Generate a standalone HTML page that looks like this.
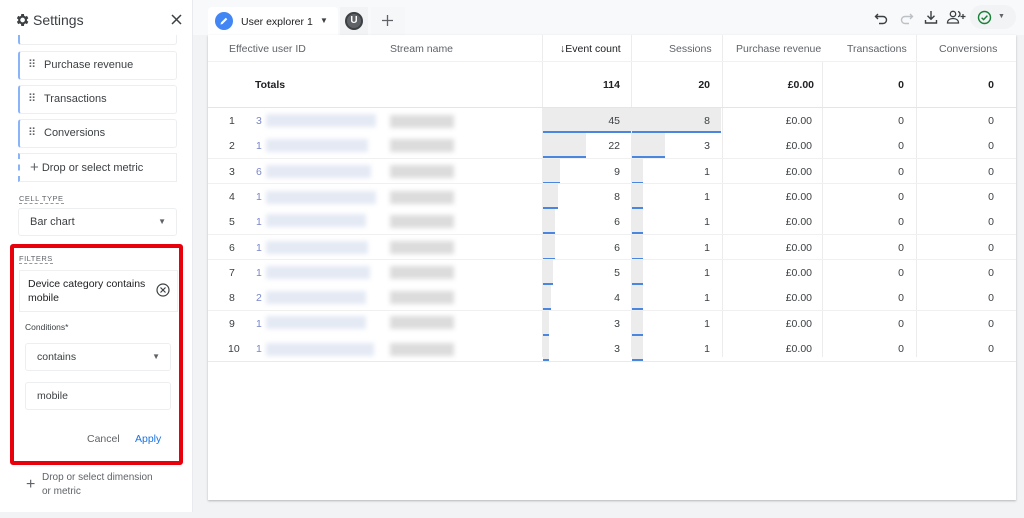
<!DOCTYPE html>
<html><head><meta charset="utf-8"><style>
*{box-sizing:border-box;margin:0;padding:0}
body{width:1024px;height:518px;overflow:hidden;background:#f1f3f4;font-family:"Liberation Sans",Arial,sans-serif;color:#3c4043;position:relative}
.a{position:absolute}
.side{left:0;top:0;width:193px;height:512px;background:#fff;border-right:1px solid #e8eaed}
.chip{position:absolute;left:18px;width:159px;height:29px;border:1px solid #eceef0;border-left:2px solid #8ab4f8;border-radius:3px;font-size:11px;line-height:27px;padding-left:24px;color:#3c4043;background:#fff}
.chip:before{content:"⠿";position:absolute;left:8px;top:0;font-size:11px;color:#5f6368}
.card{left:208px;top:35px;width:808px;height:465px;background:#fff;box-shadow:0 1px 2px rgba(0,0,0,.25)}
.h{position:absolute;top:43px;font-size:10.5px;color:#5f6368}
.r{position:absolute;left:208px;width:808px;height:25px;font-size:10.5px;color:#3c4043}
.r span{position:absolute;top:7px}
.n{left:21px}
.num{text-align:right}
.vl{position:absolute;top:35px;width:1px;height:322px;background:#ececec}
.bar{position:absolute;height:25px;background:#ececec;border-bottom:2px solid #4a86e0}
.blob1{position:absolute;height:13px;background:#e4e9f4;filter:blur(2.5px)}
.blob2{position:absolute;height:13px;background:#dcdcdc;filter:blur(2.5px)}
</style></head><body>
<div class="a" style="left:0;top:0;width:1024px;height:35px;background:#f8f9fa"></div>
<div class="a side"></div>
<svg class="a" style="left:14px;top:12px" width="16" height="16" viewBox="0 0 24 24"><path fill="#3c4043" d="M19.4 13a7.6 7.6 0 0 0 0-2l2.1-1.6-2-3.5-2.5 1a7 7 0 0 0-1.7-1L14.9 3h-4l-.4 2.9a7 7 0 0 0-1.7 1l-2.5-1-2 3.5L6.4 11a7.6 7.6 0 0 0 0 2l-2.1 1.6 2 3.5 2.5-1a7 7 0 0 0 1.7 1l.4 2.9h4l.4-2.9a7 7 0 0 0 1.7-1l2.5 1 2-3.5zM12.9 15.5a3.5 3.5 0 1 1 0-7 3.5 3.5 0 0 1 0 7z"/></svg>
<div class="a" style="left:33px;top:12px;font-size:14px;color:#3c4043">Settings</div>
<svg class="a" style="left:171px;top:14px" width="11" height="11" viewBox="0 0 11 11"><path d="M1 1L10 10M10 1L1 10" stroke="#3c4043" stroke-width="1.5"/></svg>
<div class="a" style="left:18px;top:35px;width:159px;height:10px;border:1px solid #eceef0;border-top:none;border-left:2px solid #8ab4f8;border-radius:0 0 3px 3px"></div>
<div class="chip" style="top:51px">Purchase revenue</div>
<div class="chip" style="top:85px">Transactions</div>
<div class="chip" style="top:119px">Conversions</div>
<div class="a" style="left:18px;top:153px;width:159px;height:29px;border:1px solid #eceef0;border-left:2px dashed #8ab4f8;font-size:11px;line-height:27px;padding-left:10px;color:#3c4043"><span style="font-size:15px;vertical-align:-1px;color:#5f6368">+</span> Drop or select metric</div>
<div class="a" style="left:19px;top:194px;font-size:7.5px;letter-spacing:.5px;color:#5f6368;border-bottom:1px dashed #999">CELL TYPE</div>
<div class="a" style="left:18px;top:208px;width:159px;height:28px;border:1px solid #eceef0;border-radius:3px;font-size:11px;line-height:26px;padding-left:11px">Bar chart<span style="position:absolute;right:10px;font-size:8px;color:#5f6368">▼</span></div>
<div class="a" style="left:10px;top:244px;width:173px;height:221px;border:4px solid #e8000b;border-radius:3px"></div>
<div class="a" style="left:19px;top:254px;font-size:7.5px;letter-spacing:.5px;color:#5f6368;border-bottom:1px dashed #999">FILTERS</div>
<div class="a" style="left:19px;top:270px;width:159px;height:41px;border:1px solid #f0f0f0;border-bottom:none;font-size:10.5px;line-height:14px;padding:6px 8px;color:#202124">Device category contains<br>mobile</div>
<svg class="a" style="left:156px;top:283px" width="14" height="14" viewBox="0 0 14 14"><circle cx="7" cy="7" r="6" fill="none" stroke="#3c4043" stroke-width="1.2"/><path d="M4.5 4.5L9.5 9.5M9.5 4.5L4.5 9.5" stroke="#3c4043" stroke-width="1.2"/></svg>
<div class="a" style="left:19px;top:311px;width:159px;height:1px;background:#eee"></div>
<div class="a" style="left:25px;top:322px;font-size:8.5px;color:#3c4043">Conditions*</div>
<div class="a" style="left:25px;top:343px;width:146px;height:28px;border:1px solid #eceef0;border-radius:3px;font-size:10.5px;line-height:26px;padding-left:11px">contains<span style="position:absolute;right:10px;font-size:8px;color:#5f6368">▼</span></div>
<div class="a" style="left:25px;top:382px;width:146px;height:28px;border:1px solid #eceef0;border-radius:3px;font-size:10.5px;line-height:26px;padding-left:11px">mobile</div>
<div class="a" style="left:87px;top:433px;font-size:10.5px;color:#5f6368">Cancel</div>
<div class="a" style="left:135px;top:433px;font-size:10.5px;color:#1a73e8">Apply</div>
<div class="a" style="left:26px;top:476px;font-size:16px;color:#5f6368">+</div>
<div class="a" style="left:42px;top:471px;font-size:10px;line-height:14px;color:#5f6368">Drop or select dimension<br>or metric</div>

<!-- tabs -->
<div class="a" style="left:208px;top:7px;width:130px;height:28px;background:#fff;border-radius:4px 4px 0 0"></div>
<div class="a" style="left:215px;top:12px;width:18px;height:18px;border-radius:50%;background:#4285f4"></div>
<svg class="a" style="left:219px;top:16px" width="10" height="10" viewBox="0 0 10 10"><path d="M1.5 8.5L2 6.5 6.8 1.7 8.3 3.2 3.5 8z" fill="#fff"/></svg>
<div class="a" style="left:241px;top:16px;font-size:10.5px;color:#202124">User explorer 1</div>
<div class="a" style="left:320px;top:16px;font-size:8px;color:#3c4043">▼</div>
<div class="a" style="left:340px;top:7px;width:28px;height:28px;background:#f1f3f4"></div>
<div class="a" style="left:345px;top:12px;width:18px;height:18px;border-radius:50%;background:#5f6368;border:2px solid #3c4043;color:#fff;font-size:10px;text-align:center;line-height:14px;font-weight:bold">U</div>
<div class="a" style="left:371px;top:7px;width:34px;height:28px;background:#f6f7f8"></div>
<svg class="a" style="left:381px;top:14px" width="13" height="13" viewBox="0 0 13 13"><path d="M6.5 1V12M1 6.5H12" stroke="#5f6368" stroke-width="1.3"/></svg>
<!-- toolbar -->
<svg class="a" style="left:873px;top:10px" width="16" height="16" viewBox="0 0 16 16"><path d="M5 4L2.5 6.5 5 9M2.5 6.5H10a3.5 3.5 0 0 1 0 7H6" fill="none" stroke="#3c4043" stroke-width="1.4"/></svg>
<svg class="a" style="left:899px;top:10px" width="16" height="16" viewBox="0 0 16 16"><path d="M11 4L13.5 6.5 11 9M13.5 6.5H6a3.5 3.5 0 0 0 0 7H10" fill="none" stroke="#bdc1c6" stroke-width="1.4"/></svg>
<svg class="a" style="left:923px;top:9px" width="16" height="16" viewBox="0 0 16 16"><path d="M8 2V10M4.5 6.8L8 10.3 11.5 6.8M2.5 11v3h11v-3" fill="none" stroke="#3c4043" stroke-width="1.4"/></svg>
<svg class="a" style="left:946px;top:9px" width="20" height="16" viewBox="0 0 20 16"><circle cx="7" cy="5" r="2.7" fill="none" stroke="#3c4043" stroke-width="1.3"/><path d="M1.5 14c0-3 2.5-4.5 5.5-4.5s5.5 1.5 5.5 4.5z" fill="none" stroke="#3c4043" stroke-width="1.3"/><path d="M12 2.5a2.7 2.7 0 0 1 0 5.2M17 5v5M14.5 7.5h5" fill="none" stroke="#3c4043" stroke-width="1.3"/></svg>
<div class="a" style="left:970px;top:5px;width:46px;height:24px;border-radius:12px;background:#f1f3f4"></div>
<svg class="a" style="left:977px;top:10px" width="15" height="15" viewBox="0 0 15 15"><circle cx="7.5" cy="7.5" r="6" fill="none" stroke="#188038" stroke-width="1.4"/><path d="M4.6 7.7L6.6 9.6 10.4 5.6" fill="none" stroke="#188038" stroke-width="1.4"/></svg>
<div class="a" style="left:998px;top:13px;font-size:7px;color:#5f6368">▼</div>

<div class="a card"></div>
<div class="vl" style="left:542px"></div>
<div class="vl" style="left:631px"></div>
<div class="vl" style="left:722px"></div>
<div class="vl" style="left:822px;top:61px;height:296px"></div>
<div class="vl" style="left:916px"></div>
<div class="h" style="left:229px">Effective user ID</div>
<div class="h" style="left:390px">Stream name</div>
<div class="h" style="left:560px;color:#202124">↓Event count</div>
<div class="h" style="left:669px">Sessions</div>
<div class="h" style="left:736px">Purchase revenue</div>
<div class="h" style="left:847px">Transactions</div>
<div class="h" style="left:939px">Conversions</div>
<div class="a" style="left:208px;top:61px;width:808px;height:1px;background:#f1f1f1"></div>
<div class="a" style="left:255px;top:79px;font-size:10.5px;font-weight:bold;color:#202124">Totals</div>
<div class="a" style="left:600px;top:79px;width:20px;text-align:right;font-size:10.5px;font-weight:bold;color:#202124">114</div>
<div class="a" style="left:690px;top:79px;width:20px;text-align:right;font-size:10.5px;font-weight:bold;color:#202124">20</div>
<div class="a" style="left:770px;top:79px;width:44px;text-align:right;font-size:10.5px;font-weight:bold;color:#202124">£0.00</div>
<div class="a" style="left:890px;top:79px;width:14px;text-align:right;font-size:10.5px;font-weight:bold;color:#202124">0</div>
<div class="a" style="left:980px;top:79px;width:14px;text-align:right;font-size:10.5px;font-weight:bold;color:#202124">0</div>
<div class="a" style="left:208px;top:107px;width:808px;height:1px;background:#e5e5e5"></div>

<!-- rows -->
<div class="bar" style="left:543px;top:108px;width:88px"></div><div class="bar" style="left:632px;top:108px;width:89px"></div>
<div class="bar" style="left:543px;top:133px;width:43px"></div><div class="bar" style="left:632px;top:133px;width:33px"></div>
<div class="bar" style="left:543px;top:159px;width:17px"></div><div class="bar" style="left:632px;top:159px;width:11px"></div>
<div class="bar" style="left:543px;top:184px;width:15px"></div><div class="bar" style="left:632px;top:184px;width:11px"></div>
<div class="bar" style="left:543px;top:209px;width:12px"></div><div class="bar" style="left:632px;top:209px;width:11px"></div>
<div class="bar" style="left:543px;top:235px;width:12px"></div><div class="bar" style="left:632px;top:235px;width:11px"></div>
<div class="bar" style="left:543px;top:260px;width:10px"></div><div class="bar" style="left:632px;top:260px;width:11px"></div>
<div class="bar" style="left:543px;top:285px;width:8px"></div><div class="bar" style="left:632px;top:285px;width:11px"></div>
<div class="bar" style="left:543px;top:311px;width:6px"></div><div class="bar" style="left:632px;top:311px;width:11px"></div>
<div class="bar" style="left:543px;top:336px;width:6px"></div><div class="bar" style="left:632px;top:336px;width:11px"></div>
<div class="a" style="left:208px;top:158px;width:808px;height:1px;background:#f0f0f0"></div>
<div class="a" style="left:208px;top:183px;width:808px;height:1px;background:#f0f0f0"></div>
<div class="a" style="left:208px;top:234px;width:808px;height:1px;background:#f0f0f0"></div>
<div class="a" style="left:208px;top:259px;width:808px;height:1px;background:#f0f0f0"></div>
<div class="a" style="left:208px;top:310px;width:808px;height:1px;background:#f0f0f0"></div>
<div class="a" style="left:208px;top:361px;width:808px;height:1px;background:#eaeaea"></div>

<div class="r" style="top:108px"><span class="n">1</span><span style="left:48px;color:#7986cb">3</span><i class="blob1" style="left:58px;top:6px;width:110px"></i><i class="blob2" style="left:182px;top:7px;width:64px"></i><span class="num" style="left:390px;width:22px">45</span><span class="num" style="left:480px;width:22px">8</span><span class="num" style="left:560px;width:44px">£0.00</span><span class="num" style="left:680px;width:16px">0</span><span class="num" style="left:770px;width:16px">0</span></div>
<div class="r" style="top:133px"><span class="n">2</span><span style="left:48px;color:#7986cb">1</span><i class="blob1" style="left:58px;top:6px;width:102px"></i><i class="blob2" style="left:182px;top:6px;width:64px"></i><span class="num" style="left:390px;width:22px">22</span><span class="num" style="left:480px;width:22px">3</span><span class="num" style="left:560px;width:44px">£0.00</span><span class="num" style="left:680px;width:16px">0</span><span class="num" style="left:770px;width:16px">0</span></div>
<div class="r" style="top:159px"><span class="n">3</span><span style="left:48px;color:#7986cb">6</span><i class="blob1" style="left:58px;top:6px;width:105px"></i><i class="blob2" style="left:182px;top:6px;width:64px"></i><span class="num" style="left:390px;width:22px">9</span><span class="num" style="left:480px;width:22px">1</span><span class="num" style="left:560px;width:44px">£0.00</span><span class="num" style="left:680px;width:16px">0</span><span class="num" style="left:770px;width:16px">0</span></div>
<div class="r" style="top:184px"><span class="n">4</span><span style="left:48px;color:#7986cb">1</span><i class="blob1" style="left:58px;top:7px;width:110px"></i><i class="blob2" style="left:182px;top:7px;width:64px"></i><span class="num" style="left:390px;width:22px">8</span><span class="num" style="left:480px;width:22px">1</span><span class="num" style="left:560px;width:44px">£0.00</span><span class="num" style="left:680px;width:16px">0</span><span class="num" style="left:770px;width:16px">0</span></div>
<div class="r" style="top:209px"><span class="n">5</span><span style="left:48px;color:#7986cb">1</span><i class="blob1" style="left:58px;top:5px;width:100px"></i><i class="blob2" style="left:182px;top:6px;width:64px"></i><span class="num" style="left:390px;width:22px">6</span><span class="num" style="left:480px;width:22px">1</span><span class="num" style="left:560px;width:44px">£0.00</span><span class="num" style="left:680px;width:16px">0</span><span class="num" style="left:770px;width:16px">0</span></div>
<div class="r" style="top:235px"><span class="n">6</span><span style="left:48px;color:#7986cb">1</span><i class="blob1" style="left:58px;top:6px;width:102px"></i><i class="blob2" style="left:182px;top:6px;width:64px"></i><span class="num" style="left:390px;width:22px">6</span><span class="num" style="left:480px;width:22px">1</span><span class="num" style="left:560px;width:44px">£0.00</span><span class="num" style="left:680px;width:16px">0</span><span class="num" style="left:770px;width:16px">0</span></div>
<div class="r" style="top:260px"><span class="n">7</span><span style="left:48px;color:#7986cb">1</span><i class="blob1" style="left:58px;top:6px;width:104px"></i><i class="blob2" style="left:182px;top:6px;width:64px"></i><span class="num" style="left:390px;width:22px">5</span><span class="num" style="left:480px;width:22px">1</span><span class="num" style="left:560px;width:44px">£0.00</span><span class="num" style="left:680px;width:16px">0</span><span class="num" style="left:770px;width:16px">0</span></div>
<div class="r" style="top:285px"><span class="n">8</span><span style="left:48px;color:#7986cb">2</span><i class="blob1" style="left:58px;top:6px;width:100px"></i><i class="blob2" style="left:182px;top:6px;width:64px"></i><span class="num" style="left:390px;width:22px">4</span><span class="num" style="left:480px;width:22px">1</span><span class="num" style="left:560px;width:44px">£0.00</span><span class="num" style="left:680px;width:16px">0</span><span class="num" style="left:770px;width:16px">0</span></div>
<div class="r" style="top:311px"><span class="n">9</span><span style="left:48px;color:#7986cb">1</span><i class="blob1" style="left:58px;top:5px;width:100px"></i><i class="blob2" style="left:182px;top:5px;width:64px"></i><span class="num" style="left:390px;width:22px">3</span><span class="num" style="left:480px;width:22px">1</span><span class="num" style="left:560px;width:44px">£0.00</span><span class="num" style="left:680px;width:16px">0</span><span class="num" style="left:770px;width:16px">0</span></div>
<div class="r" style="top:336px"><span class="n" style="left:20px">10</span><span style="left:48px;color:#7986cb">1</span><i class="blob1" style="left:58px;top:7px;width:108px"></i><i class="blob2" style="left:182px;top:7px;width:64px"></i><span class="num" style="left:390px;width:22px">3</span><span class="num" style="left:480px;width:22px">1</span><span class="num" style="left:560px;width:44px">£0.00</span><span class="num" style="left:680px;width:16px">0</span><span class="num" style="left:770px;width:16px">0</span></div>
</body></html>
